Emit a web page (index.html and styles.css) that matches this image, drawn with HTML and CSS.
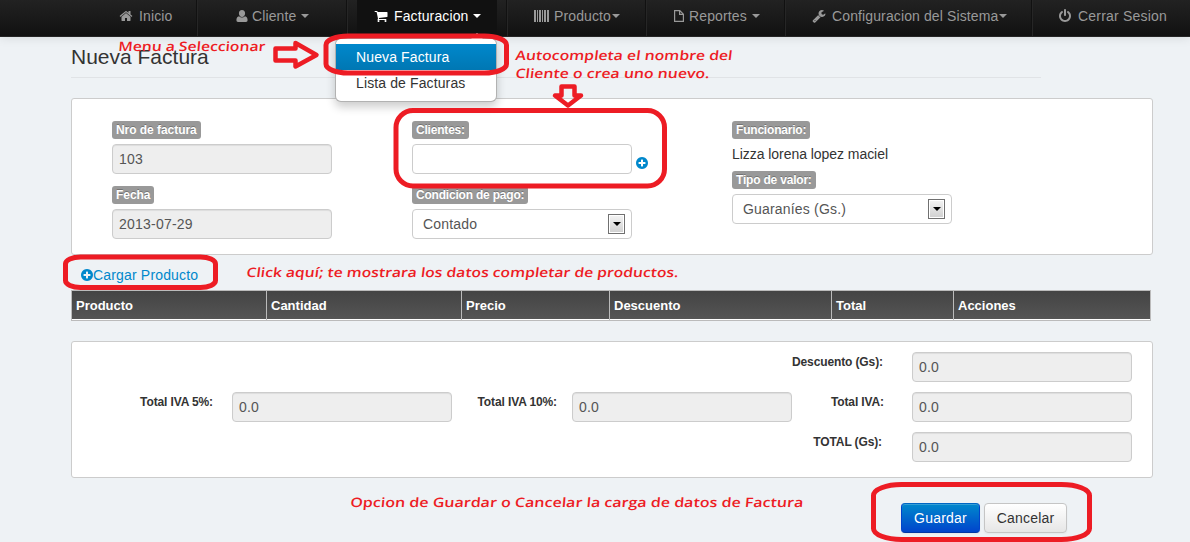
FILE: index.html
```html
<!DOCTYPE html>
<html lang="es">
<head>
<meta charset="utf-8">
<title>Nueva Factura</title>
<link rel="stylesheet" href="styles.css">
</head>
<body>
<nav class="navbar">
  <a class="nav-item nav-home"><svg class="icon" viewBox="0 0 1792 1792"><path d="M1472 992v480q0 26-19 45t-45 19h-384v-384h-256v384h-384q-26 0-45-19t-19-45v-480q0-1 .5-3t.5-3l575-474 575 474q1 2 1 6zm223-69l-62 74q-8 9-21 11h-3q-13 0-21-7l-692-577-692 577q-12 8-24 7-13-2-21-11l-62-74q-8-10-7-23.5t11-21.5l719-599q32-26 76-26t76 26l244 204v-195q0-14 9-23t23-9h192q14 0 23 9t9 23v408l219 182q10 8 11 21.5t-7 23.5z"/></svg><span>Inicio</span></a>
  <a class="nav-item nav-client"><svg class="icon" viewBox="0 0 14 14"><path d="M7 1C9 1 10.1 2.4 10.1 4.3S8.900 8 7 8 3.900 6.200 3.900 4.300 5 1 7 1ZM4 7.200Q7 10 10 7.200 12.600 7.700 12.600 11.300 12.600 13 11 13H3Q1.400 13 1.400 11.300 1.400 7.700 4 7.200Z"/></svg><span>Cliente</span><i class="caret"></i></a>
  <div class="nav-item nav-billing"><a class="nav-active"><svg class="icon" viewBox="0 0 1792 1792"><path d="M704 1536q0 52-38 90t-90 38-90-38-38-90 38-90 90-38 90 38 38 90zm896 0q0 52-38 90t-90 38-90-38-38-90 38-90 90-38 90 38 38 90zm128-1088v512q0 24-16.5 42.5t-40.5 21.5l-1044 122q13 60 13 70 0 16-24 64h920q26 0 45 19t19 45-19 45-45 19h-1024q-26 0-45-19t-19-45q0-11 8-31.500t16-36 21.500-40 15.500-29.500l-177-823h-204q-26 0-45-19t-19-45 19-45 45-19h256q16 0 28.500 6.500t19.500 15.500 13 24.500 8 26 5.500 29.500 4.500 26h1201q26 0 45 19t19 45z"/></svg><span>Facturacion</span><i class="caret"></i></a>
    <div class="dropdown"><a class="option selected">Nueva Factura</a><a class="option">Lista de Facturas</a></div>
  </div>
  <a class="nav-item nav-product"><svg class="icon barcode" viewBox="0 0 15 14"><path d="M0 1h2v12H0zM3 1h1v12H3zM5 1h2v12H5zM8 1h1v12H8zM10 1h2v12h-2zM13 1h2v12h-2z"/></svg><span>Producto</span><i class="caret"></i></a>
  <a class="nav-item nav-reports"><svg class="icon file" viewBox="0 0 12 14"><path d="M1.600 1.600H6.800L10.400 5.200V12.400H1.600ZM6.600 1.600V5.400H10.400" fill="none" stroke="currentColor" stroke-width="1.200"/></svg><span>Reportes</span><i class="caret"></i></a>
  <a class="nav-item nav-config"><svg class="icon" viewBox="0 0 1792 1792"><path d="M448 1472q0-26-19-45t-45-19-45 19-19 45 19 45 45 19 45-19 19-45zm644-420l-682 682q-37 37-90 37-52 0-91-37l-106-108q-38-36-38-90 0-53 38-91l681-681q39 98 114.500 173.500t173.500 114.500zm634-435q0 39-23 106-47 134-164.500 217.500t-258.500 83.500q-185 0-316.500-131.500t-131.500-316.500 131.500-316.500 316.500-131.500q58 0 121.500 16.500t107.500 46.500q16 11 16 28t-16 28l-293 169v224l193 107q5-3 79-48.500t135.500-81 70.500-35.500q15 0 23.500 10t8.500 25z"/></svg><span>Configuracion del Sistema</span><i class="caret"></i></a>
  <a class="nav-item nav-logout"><svg class="icon" viewBox="0 0 1792 1792"><path d="M1664 896q0 156-61 298t-164 245-245 164-298 61-298-61-245-164-164-245-61-298q0-182 80.500-343t226.500-270q43-32 95.500-25t83.500 50q32 42 24.500 94.500t-49.500 84.500q-98 74-151.500 181t-53.500 228q0 104 40.500 198.500t109.500 163.500 163.500 109.500 198.500 40.500 198.500-40.500 163.500-109.500 109.500-163.500 40.500-198.500q0-121-53.500-228t-151.500-181q-42-32-49.500-84.500t24.500-94.500q31-43 84-50t95 25q146 109 226.500 270t80.500 343zm-640-768v640q0 52-38 90t-90 38-90-38-38-90v-640q0-52 38-90t90-38 90 38 38 90z"/></svg><span>Cerrar Sesion</span></a>
</nav>
<main class="page">
  <h1 class="title">Nueva Factura</h1>
  <section class="panel invoice">
    <div class="column">
      <div class="field"><label class="badge">Nro de factura</label><div class="input readonly">103</div></div>
      <div class="field"><label class="badge">Fecha</label><div class="input readonly">2013-07-29</div></div>
    </div>
    <div class="column">
      <div class="field"><label class="badge">Clientes:</label><div class="with-add"><div class="input"></div><svg class="plus" viewBox="128 128 1536 1536"><path d="M1344 960v-128q0-26-19-45t-45-19h-256v-256q0-26-19-45t-45-19h-128q-26 0-45 19t-19 45v256h-256q-26 0-45 19t-19 45v128q0 26 19 45t45 19h256v256q0 26 19 45t45 19h128q26 0 45-19t19-45v-256h256q26 0 45-19t19-45zm320-64q0 209-103 385.500t-279.500 279.500-385.500 103-385.500-103-279.500-279.500-103-385.500 103-385.500 279.500-279.500 385.500-103 385.500 103 279.500 279.500 103 385.500z"/></svg></div></div>
      <div class="field"><label class="badge">Condicion de pago:</label><div class="input select"><span>Contado</span><i class="arrow"></i></div></div>
    </div>
    <div class="column staff">
      <div class="field"><label class="badge">Funcionario:</label><div class="value">Lizza lorena lopez maciel</div></div>
      <div class="field"><label class="badge">Tipo de valor:</label><div class="input select"><span>Guaraníes (Gs.)</span><i class="arrow"></i></div></div>
    </div>
  </section>
  <a class="load"><svg class="plus" viewBox="128 128 1536 1536"><path d="M1344 960v-128q0-26-19-45t-45-19h-256v-256q0-26-19-45t-45-19h-128q-26 0-45 19t-19 45v256h-256q-26 0-45 19t-19 45v128q0 26 19 45t45 19h256v256q0 26 19 45t45 19h128q26 0 45-19t19-45v-256h256q26 0 45-19t19-45zm320-64q0 209-103 385.500t-279.500 279.500-385.500 103-385.500-103-279.500-279.500-103-385.500 103-385.500 279.500-279.500 385.500-103 385.500 103 279.500 279.500 103 385.500z"/></svg><span>Cargar Producto</span></a>
  <div class="table-head"><span>Producto</span><span>Cantidad</span><span>Precio</span><span>Descuento</span><span>Total</span><span>Acciones</span></div>
  <section class="panel totals">
    <label class="caption discount">Descuento (Gs):</label><div class="input readonly last">0.0</div>
    <label class="caption">Total IVA 5%:</label><div class="input readonly">0.0</div>
    <label class="caption iva10">Total IVA 10%:</label><div class="input readonly">0.0</div>
    <label class="caption iva">Total IVA:</label><div class="input readonly">0.0</div>
    <label class="caption discount">TOTAL (Gs):</label><div class="input readonly last">0.0</div>
  </section>
  <div class="actions"><button class="button primary">Guardar</button><button class="button">Cancelar</button></div>
</main>
<svg class="notes" viewBox="0 0 1190 542">
  <g class="marks">
    <rect x="326" y="36" width="180.500" height="37" rx="22" ry="9"/>
    <rect x="396" y="110.500" width="268.500" height="75.500" rx="17"/>
    <rect x="65.500" y="257" width="150" height="30.500" rx="15" ry="7"/>
    <rect x="873.500" y="484.500" width="216" height="55" rx="28" ry="11"/>
    <path class="pointer" d="M275.500 48.500H295.500V43L316.500 55 295.500 66.500V60.500H275.500Z"/>
    <path class="pointer" d="M561.500 86.500H574.500V95.500H581L568 105.500 555 95.500H561.500Z"/>
  </g>
  <g class="note-text">
    <text transform="translate(118 51) skewX(-5)" textLength="147" lengthAdjust="spacingAndGlyphs">Menu a Seleccionar</text>
    <text transform="translate(515 60) skewX(-7)" textLength="217" lengthAdjust="spacingAndGlyphs">Autocompleta el nombre del</text>
    <text transform="translate(515 78) skewX(-7)" textLength="194" lengthAdjust="spacingAndGlyphs">Cliente o crea uno nuevo.</text>
    <text transform="translate(246 277) skewX(-7)" textLength="432" lengthAdjust="spacingAndGlyphs">Click aquí; te mostrara los datos completar de productos.</text>
    <text transform="translate(350 507) skewX(-5)" textLength="453" lengthAdjust="spacingAndGlyphs">Opcion de Guardar o Cancelar la carga de datos de Factura</text>
  </g>
</svg>
</body>
</html>
```
FILE: styles.css
```css
* { box-sizing: border-box; }
body {
  position: relative;
  margin: 0;
  height: 542px;
  overflow: hidden;
  background: #eef2f5;
  color: #333;
  font: 14px/20px "Liberation Sans", Arial, sans-serif;
  letter-spacing: .12px;
}
.navbar {
  position: relative;
  z-index: 2;
  display: grid;
  grid-template-columns: 198px 150px 160px 139px 139px 247px 157px;
  height: 37px;
  background: linear-gradient(#222, #111);
  border-bottom: 1px solid #252525;
  box-shadow: 0 1px 10px rgba(0, 0, 0, .1);
  color: #999;
}
.nav-item {
  display: flex;
  align-items: center;
  padding-bottom: 4px;
  border-right: 1px solid #262626;
  box-shadow: inset -1px 0 #111;
  white-space: nowrap;
}
.icon { width: 14px; height: 14px; margin-right: 6px; fill: currentColor; flex: none; }
.barcode { width: 15px; margin-right: 5px; }
.file { width: 12px; margin-right: 4px; }
.caret {
  margin-left: 5px;
  border: 4px solid transparent;
  border-top-color: currentColor;
  border-bottom: 0;
}
.nav-home { padding-left: 119px; }
.nav-client { padding-left: 37px; }
.nav-client .icon { margin-right: 3px; }
.nav-billing { position: relative; padding: 0 10px 0 9px; }
.nav-active {
  display: flex;
  align-items: center;
  width: 140px;
  height: 36px;
  padding: 0 0 4px 17px;
  background: #111;
  color: #fff;
}
.nav-product { padding-left: 26px; }
.nav-product .caret, .nav-config .caret { margin-left: 1px; }
.nav-reports { padding-left: 26px; }
.nav-config { padding-left: 26px; }
.nav-logout { padding-left: 25px; border: 0; box-shadow: none; letter-spacing: .2px; }
.dropdown {
  position: absolute;
  top: 38px;
  left: -13px;
  width: 162px;
  padding: 5px 0;
  background: #fff;
  border: 1px solid rgba(0, 0, 0, .3);
  border-radius: 6px;
  box-shadow: 0 5px 10px rgba(0, 0, 0, .2);
}
.dropdown::before {
  content: "";
  position: absolute;
  top: -6px;
  right: 13px;
  border: 6px solid transparent;
  border-top: 0;
  border-bottom-color: #fff;
}
.option { display: block; padding: 3px 20px; color: #333; }
.selected { background: linear-gradient(#08c, #0077b3); color: #fff; }
.page { padding-left: 71px; }
.title {
  width: 970px;
  height: 41px;
  margin: 0;
  border-bottom: 1px solid #e0e3e6;
  font-size: 21px;
  font-weight: 400;
  line-height: 40px;
  letter-spacing: 0;
}
.panel {
  width: 1082px;
  background: #fff;
  border: 1px solid #ccc;
  border-radius: 3px;
}
.invoice {
  display: flex;
  height: 157px;
  margin-top: 20px;
  padding: 22px 0 0 40px;
  gap: 80px;
}
.column { display: flex; flex-direction: column; gap: 12px; width: 220px; }
.column + .staff { margin-left: 20px; }
.staff { gap: 7px; }
.field { display: flex; flex-direction: column; align-items: flex-start; gap: 5px; }
.value { letter-spacing: -.05px; }
.badge {
  height: 18px;
  padding: 0 4px;
  background: #999;
  border-radius: 3px;
  color: #fff;
  font-size: 12px;
  font-weight: 700;
  line-height: 18px;
  letter-spacing: -.2px;
  text-shadow: 0 -1px rgba(0, 0, 0, .25);
  white-space: nowrap;
}
.column:first-child .badge { letter-spacing: -.05px; }
.input {
  flex: none;
  width: 220px;
  height: 30px;
  padding: 4px 6px;
  background: #fff;
  border: 1px solid #ccc;
  border-radius: 4px;
  color: #555;
}
.readonly { background: #eee; box-shadow: inset 0 1px 1px rgba(0, 0, 0, .075); letter-spacing: .22px; }
.with-add { display: flex; align-items: center; gap: 4px; }
.plus { flex: none; width: 12px; height: 12px; fill: #08c; }
.with-add .plus { margin-top: 7px; }
.select { display: flex; align-items: center; justify-content: space-between; padding-left: 10px; letter-spacing: .18px; }
.arrow {
  display: grid;
  place-items: center;
  width: 17px;
  height: 20px;
  background: linear-gradient(#f4f4f4, #cfcfcf);
  border: 1px solid #707070;
  box-shadow: inset 0 0 0 1px #fff;
}
.arrow::before {
  content: "";
  border: 4px solid transparent;
  border-top-color: #000;
  border-bottom: 0;
}
.load { display: flex; align-items: center; height: 35px; padding: 5px 0 0 10px; color: #08c; letter-spacing: .17px; }
.table-head {
  display: grid;
  grid-template-columns: 195px 195px 148px 222px 122px 198px;
  width: 1080px;
  height: 31px;
  background: linear-gradient(#444, #555);
  border: 1px solid #bbb;
  box-shadow: inset 0 -1px #fff;
  color: #fff;
  font-size: 13px;
  font-weight: 700;
  line-height: 29px;
  letter-spacing: 0;
}
.table-head span { padding-left: 4px; border-right: 1px solid #bbb; }
.table-head span:last-child { border: 0; }
.totals {
  display: grid;
  grid-template-columns: 160px 220px 120px 220px 120px 220px;
  grid-auto-rows: 30px;
  row-gap: 10px;
  height: 137px;
  margin-top: 20px;
  padding-top: 10px;
}
.caption { padding-right: 19px; font-size: 12px; font-weight: 700; text-align: right; letter-spacing: -.12px; white-space: nowrap; }
.discount { grid-column: 5; padding-right: 30px; }
.last { grid-column: 6; }
.iva10 { padding-right: 15px; }
.iva { padding-right: 28px; }
.actions { display: flex; gap: 4px; padding: 25px 0 0 830px; }
.button {
  width: 83px;
  height: 30px;
  padding: 0;
  background: linear-gradient(#fff, #e6e6e6);
  border: 1px solid #c5c5c5;
  border-radius: 4px;
  box-shadow: inset 0 1px rgba(255, 255, 255, .2), 0 1px 2px rgba(0, 0, 0, .05);
  color: #333;
  font: inherit;
  letter-spacing: .2px;
}
.primary { width: 79px; background: linear-gradient(#08c, #04c); border-color: #0067c4 #04c #0037a4; color: #fff; }
.notes { position: absolute; z-index: 3; top: 0; left: 0; width: 1190px; height: 542px; pointer-events: none; }
.marks { fill: none; stroke: #ed1c24; stroke-width: 5; }
.pointer { stroke-width: 4.500; stroke-linejoin: round; }
.note-text { fill: #ed1c24; font: 600 13px "Open Sans", sans-serif; letter-spacing: 0; }
```
